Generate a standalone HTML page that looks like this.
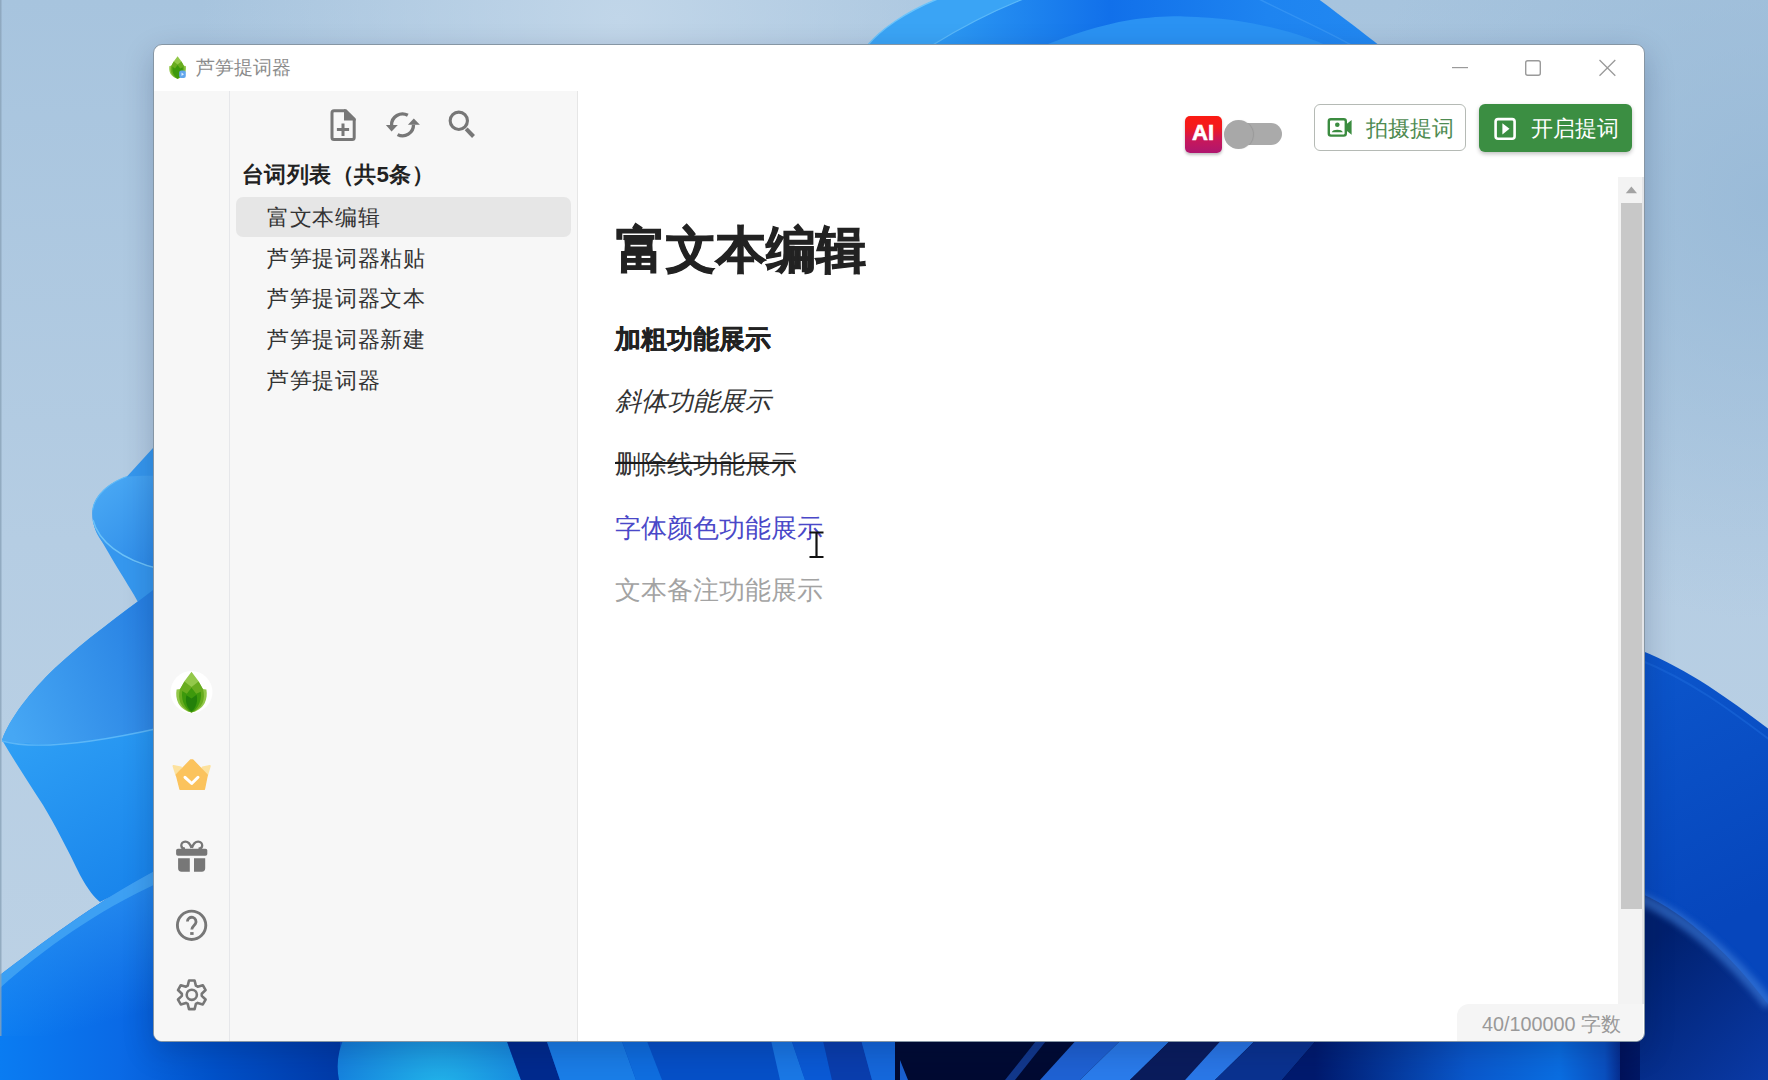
<!DOCTYPE html>
<html><head><meta charset="utf-8">
<style>
*{margin:0;padding:0;box-sizing:border-box}
html,body{width:1768px;height:1080px;overflow:hidden;font-family:"Liberation Sans",sans-serif}
body{position:relative;background:#aec8df}
svg{position:absolute;left:0;top:0;overflow:visible}
.a{position:absolute;white-space:nowrap;line-height:1}
#win{position:absolute;left:153px;top:44px;width:1492px;height:998px;border:1px solid #8696a4;border-radius:9px;background:#fff;overflow:hidden;box-shadow:0 10px 30px rgba(0,20,60,.22)}
</style></head>
<body>
<!-- wallpaper -->
<svg width="1768" height="1080" viewBox="0 0 1768 1080">
  <defs>
    <linearGradient id="bgG" x1="0" y1="0" x2="0" y2="1">
      <stop offset="0" stop-color="#a7c4de"/>
      <stop offset="0.5" stop-color="#b5cde3"/>
      <stop offset="1" stop-color="#bdd2e5"/>
    </linearGradient>
    <radialGradient id="bgLight" cx="620" cy="20" r="420" gradientUnits="userSpaceOnUse">
      <stop offset="0" stop-color="#c4d8ea" stop-opacity=".9"/>
      <stop offset="1" stop-color="#c4d8ea" stop-opacity="0"/>
    </radialGradient>
    <radialGradient id="bgDark" cx="1768" cy="200" r="420" gradientUnits="userSpaceOnUse">
      <stop offset="0" stop-color="#96b8d6" stop-opacity=".8"/>
      <stop offset="1" stop-color="#96b8d6" stop-opacity="0"/>
    </radialGradient>
    <linearGradient id="domeMid" x1="930" y1="0" x2="1380" y2="0" gradientUnits="userSpaceOnUse">
      <stop offset="0" stop-color="#2e9cf4"/>
      <stop offset="0.4" stop-color="#1170ea"/>
      <stop offset="0.75" stop-color="#1e84f0"/>
      <stop offset="1" stop-color="#2288f1"/>
    </linearGradient>
    <linearGradient id="cupA" x1="90" y1="480" x2="160" y2="560" gradientUnits="userSpaceOnUse">
      <stop offset="0" stop-color="#4cabf5"/>
      <stop offset="1" stop-color="#2d8be8"/>
    </linearGradient>
    <linearGradient id="cupB" x1="0" y1="700" x2="160" y2="640" gradientUnits="userSpaceOnUse">
      <stop offset="0" stop-color="#46a7f4"/>
      <stop offset="1" stop-color="#2780e2"/>
    </linearGradient>
    <linearGradient id="sideB" x1="0" y1="740" x2="100" y2="900" gradientUnits="userSpaceOnUse">
      <stop offset="0" stop-color="#2fa0f5"/>
      <stop offset="1" stop-color="#1a86ec"/>
    </linearGradient>
    <linearGradient id="petC" x1="0" y1="890" x2="40" y2="1040" gradientUnits="userSpaceOnUse">
      <stop offset="0" stop-color="#2a90f0" stop-opacity="1"/>
      <stop offset="1" stop-color="#2a90f0" stop-opacity="0"/>
    </linearGradient>
    <linearGradient id="botL" x1="0" y1="0" x2="340" y2="0" gradientUnits="userSpaceOnUse">
      <stop offset="0" stop-color="#0a7cf2"/>
      <stop offset="0.35" stop-color="#0a6ae6"/>
      <stop offset="0.65" stop-color="#0050c8"/>
      <stop offset="1" stop-color="#003aa8"/>
    </linearGradient>
    <radialGradient id="cyan" cx="440" cy="1090" r="110" gradientUnits="userSpaceOnUse">
      <stop offset="0" stop-color="#22b4ea"/>
      <stop offset="1" stop-color="#1580de"/>
    </radialGradient>
    <linearGradient id="botR" x1="1315" y1="0" x2="1620" y2="0" gradientUnits="userSpaceOnUse">
      <stop offset="0" stop-color="#001a6e"/>
      <stop offset="0.5" stop-color="#0a58cc"/>
      <stop offset="0.8" stop-color="#0a6ee2"/>
      <stop offset="0.95" stop-color="#0a50c0"/>
      <stop offset="1" stop-color="#062e90"/>
    </linearGradient>
    <linearGradient id="botRR" x1="1620" y1="0" x2="1768" y2="0" gradientUnits="userSpaceOnUse">
      <stop offset="0" stop-color="#00125a"/>
      <stop offset="1" stop-color="#0a3aa6"/>
    </linearGradient>
    <linearGradient id="rightP" x1="1644" y1="650" x2="1768" y2="900" gradientUnits="userSpaceOnUse">
      <stop offset="0" stop-color="#0c56cc"/>
      <stop offset="1" stop-color="#0646bc"/>
    </linearGradient>
  <linearGradient id="rightLow" x1="1644" y1="950" x2="1768" y2="1080" gradientUnits="userSpaceOnUse">
      <stop offset="0" stop-color="#00206e"/>
      <stop offset="1" stop-color="#0a3aa6"/>
    </linearGradient>
    <filter id="blur3" x="-20%" y="-20%" width="140%" height="140%"><feGaussianBlur stdDeviation="3"/></filter>
  </defs>
  <rect x="0" y="0" width="1768" height="1080" fill="url(#bgG)"/>
  <rect x="0" y="0" width="1768" height="1080" fill="url(#bgLight)"/>
  <rect x="0" y="0" width="1768" height="1080" fill="url(#bgDark)"/>
  <!-- top dome -->
  <path d="M867,46 C880,30 905,12 940,-2 L1317,-2 C1340,15 1362,32 1380,46 Z" fill="url(#domeMid)"/>
  <path d="M867,46 C880,30 905,12 940,-2 L1026,-2 C1000,8 965,25 931,46Z" fill="#3aa4f5"/>
  <path d="M867,46 C880,30 905,12 940,-2" stroke="#6cc4fa" stroke-width="1.5" fill="none"/>
  <path d="M931,46 C965,25 1000,8 1026,-2" stroke="#5ab8f8" stroke-width="1.2" fill="none"/>
  <path d="M1043,46 C1070,35 1100,25 1130,20 C1150,17 1170,16 1184,16.4 C1220,17 1250,22 1274,28 C1295,33 1315,40 1328,46 Z" fill="#2a92f3"/>
  <path d="M1257,-2 C1290,15 1325,30 1353,46" stroke="#3a98f5" stroke-width="1.5" fill="none" opacity=".7"/>
  <!-- left petals -->
  <path d="M153,448 L127,476.5 C110,482 95,495 92.5,510 C91.5,522 95,530 100,538 C110,556 122,575 131,590 C140,605 148,620 153,634 L160,634 L160,448 Z" fill="#3597ee"/>
  <path d="M127,476.5 C140,475.5 150,475.5 160,476 L160,569 C140,566 115,556 104,544 C95,534 91,520 93,508 C95,495 108,483 127,476.5Z" fill="url(#cupA)"/>
  <path d="M93,520 C98,540 120,560 160,569" stroke="#6cc2f8" stroke-width="1.4" fill="none"/>
  <path d="M127,476.5 C110,482 95,495 92.5,510" stroke="#62bcf8" stroke-width="1.2" fill="none"/>
  <path d="M153,590 C120,615 85,640 55,668 C30,692 10,718 2,740 C15,762 30,785 43,805 C55,825 68,850 80,875 C88,890 95,898 100,902 L160,872 L160,590 Z" fill="url(#sideB)"/>
  <path d="M153,590 C120,615 85,640 55,668 C30,692 10,718 2,740 C30,748 80,745 160,727 L160,590Z" fill="url(#cupB)"/>
  <path d="M2,741 C30,749 80,746 160,728" stroke="#5cb6f7" stroke-width="1.4" fill="none"/>
  <path d="M0,975 C40,945 90,905 160,868 L160,1080 L0,1080 Z" fill="url(#botL)"/>
  <path d="M0,975 C40,945 90,905 160,868 L160,1080 L0,1080 Z" fill="url(#petC)"/>
  <path d="M0,975 C40,945 90,905 160,868 L160,882 C95,912 45,948 0,988Z" fill="#45a6f4" opacity=".8"/>
  <rect x="0" y="0" width="1.5" height="1080" fill="#8aa2b8" opacity=".8"/>
  <!-- bottom strip -->
  <rect x="0" y="1036" width="340" height="44" fill="url(#botL)"/>
  <rect x="340" y="1036" width="560" height="44" fill="#0650c8"/>
  <path d="M339,1080 C336,1065 338,1050 345,1036 L505,1036 C510,1050 515,1065 521,1080Z" fill="url(#cyan)"/>
  <path d="M505,1036 L545,1036 L560,1080 L521,1080Z" fill="#002a8e"/>
  <path d="M545,1036 L620,1036 L636,1080 L560,1080Z" fill="#1a7ee8"/>
  <path d="M620,1036 L645,1036 L662,1080 L636,1080Z" fill="#0f6ee0"/>
  <path d="M770,1036 L790,1036 L805,1080 L780,1080Z" fill="#1a78e6"/>
  <path d="M790,1036 L822,1036 L832,1080 L805,1080Z" fill="#0a5ad6"/>
  <path d="M822,1036 L860,1036 L872,1080 L832,1080Z" fill="#0a3eae"/>
  <path d="M860,1036 L895,1036 L905,1080 L872,1080Z" fill="#1568dc"/>
  <rect x="895" y="1036" width="420" height="44" fill="#000a32"/>
  <path d="M900,1060 L908,1080 L900,1080Z" fill="#1a60d0"/>
  <path d="M1040,1036 L1050,1036 L1015,1080 L1005,1080Z" fill="#12388c"/>
  <path d="M1080,1036 L1125,1036 L1080,1080 L1040,1080Z" fill="#1f62d4"/>
  <path d="M1125,1036 L1175,1036 L1130,1080 L1080,1080Z" fill="#2a7cec"/>
  <path d="M1175,1036 L1225,1036 L1185,1080 L1130,1080Z" fill="#0a1c5c"/>
  <path d="M1225,1036 L1260,1036 L1215,1080 L1185,1080Z" fill="#2a78e8"/>
  <path d="M1215,1080 L1260,1036 L1320,1036 L1282,1080Z" fill="#0a3290"/>
  <path d="M1282,1080 L1320,1036 L1768,1036 L1768,1080Z" fill="url(#botR)"/>
  <rect x="1620" y="1036" width="148" height="44" fill="url(#botRR)"/>
  <!-- right strip -->
  <path d="M1640,650 C1690,670 1730,700 1770,730 L1770,1080 L1640,1080 Z" fill="url(#rightP)"/>
  <path d="M1640,660 C1690,680 1730,710 1770,740" stroke="#1a68d8" stroke-width="2" fill="none" opacity=".6"/>
  <path d="M1640,893 C1690,915 1735,960 1770,1007 L1770,1080 L1640,1080 Z" fill="url(#rightLow)"/>
  <path d="M1640,898 C1690,920 1735,962 1770,1005" stroke="#3f7fdc" stroke-width="12" fill="none" opacity=".6" filter="url(#blur3)"/>
</svg>

<div id="win"></div>

<!-- title bar -->
<svg width="1768" height="1080" viewBox="0 0 1768 1080">
  <!-- app icon -->
  <g transform="translate(177.6,56.3) scale(0.55) translate(-191.5,-671.8)">
  <path d="M191.5,671.8 L198.6,681.2 L202.6,689 L206.4,689.6 C207.2,694 206.8,699 204.5,703.5 C201.5,708.5 196.5,711.5 191.5,712.6 C186.5,711.5 181.5,708.5 178.5,703.5 C176.2,699 175.8,694 176.6,689.6 L180.4,689 L184.4,681.2Z" fill="#93c84a"/>
  <path d="M184.4,681.4 L191.5,686.9 L198.6,681.4 L203,689 C204.5,694 204.2,699 202.5,703 C200,708 196,711 191.5,712.6 C187,711 183,708 180.5,703 C178.8,699 178.5,694 180,689Z" fill="#68ac1f"/>
  <path d="M182.2,691 L186.8,693.8 L191.5,687.8 L196.2,693.8 L200.8,691.8 C201.5,697 200.5,702 198,706 C196,709.5 193.5,711.5 191.5,712.6 C189.5,711.5 187,709.5 185,706 C182.5,702 181.5,697 182.2,691Z" fill="#3d990c"/>
  </g>
  <rect x="179.2" y="70.5" width="6.6" height="7.6" rx="2" fill="#62a6ec"/>
  <path d="M181.5,72.5 L184,74.3 L181.5,76.1Z" fill="#d8ecff"/>
  <!-- window controls -->
  <rect x="1452" y="67" width="16" height="1.2" fill="#9a9a9a"/>
  <rect x="1525.7" y="60.7" width="14.6" height="14.6" rx="2" fill="none" stroke="#9a9a9a" stroke-width="1.4"/>
  <path d="M1599.5,60 L1615.3,75.8 M1615.3,60 L1599.5,75.8" stroke="#9a9a9a" stroke-width="1.3"/>
</svg>
<div class="a" style="left:196px;top:58px;font-size:19px;color:#8c8c8c">芦笋提词器</div>

<!-- nav column + list -->
<div class="a" style="left:154px;top:91px;width:75px;height:950px;background:#f7f7f7;border-bottom-left-radius:8px"></div>
<div class="a" style="left:229px;top:91px;width:1px;height:950px;background:#e6e7ea"></div>
<div class="a" style="left:230px;top:91px;width:347px;height:950px;background:#f7f7f7"></div>
<div class="a" style="left:577px;top:91px;width:1px;height:950px;background:#e6e6e6"></div>

<svg width="1768" height="1080" viewBox="0 0 1768 1080">
  <g fill="none" stroke="#777" stroke-width="3">
    <!-- new file -->
    <path d="M345.5,110.7 H334 a2,2 0 0 0 -2,2 V137.5 a2,2 0 0 0 2,2 H352.2 a2,2 0 0 0 2,-2 V119"/>
    <path d="M343,123.6 V135.9 M336.9,129.6 H349.1"/>
    <!-- refresh -->
    <path d="M391.6,125 A10.9,10.9 0 0 1 407.8,115.3" stroke-width="3.3"/>
    <path d="M413.5,124.8 A10.9,10.9 0 0 1 397.6,134.6" stroke-width="3.3"/>
    <!-- search -->
    <circle cx="458.8" cy="120.8" r="8.65" stroke-width="3.1"/>
    <path d="M466.2,128.8 L473.5,136.5" stroke-width="4"/>
  </g>
  <g fill="#777">
    <path d="M344,109.2 H346.3 L355.7,118.6 V120.5 H344Z"/>
    <path d="M385.9,125.1 H397.8 L391.6,131.4Z"/>
    <path d="M407.9,124.7 H419.9 L413.8,118.6Z"/>
  </g>
  <!-- avatar leaf -->
  <circle cx="191.5" cy="692" r="21" fill="#fff"/>
  <path d="M191.5,671.8 L198.6,681.2 L202.6,689 L206.4,689.6 C207.2,694 206.8,699 204.5,703.5 C201.5,708.5 196.5,711.5 191.5,712.6 C186.5,711.5 181.5,708.5 178.5,703.5 C176.2,699 175.8,694 176.6,689.6 L180.4,689 L184.4,681.2Z" fill="#93c84a"/>
  <path d="M184.4,681.4 L191.5,686.9 L198.6,681.4 L203,689 C204.5,694 204.2,699 202.5,703 C200,708 196,711 191.5,712.6 C187,711 183,708 180.5,703 C178.8,699 178.5,694 180,689Z" fill="#68ac1f"/>
  <path d="M182.2,691 L186.8,693.8 L191.5,687.8 L196.2,693.8 L200.8,691.8 C201.5,697 200.5,702 198,706 C196,709.5 193.5,711.5 191.5,712.6 C189.5,711.5 187,709.5 185,706 C182.5,702 181.5,697 182.2,691Z" fill="#3d990c"/>
  <path d="M186.4,695.2 L191.5,698.4 L196.6,694.7 C197.5,699 197.2,703 195.5,706.5 C194.5,708.8 193,710.5 191.5,711.5 C190,710.5 188.5,708.8 187.5,706.5 C185.8,703 185.5,699 186.4,695.2Z" fill="#23800a"/>
  <!-- crown -->
  <path d="M173.5,766 L181,767.5 L176.5,775.5Z" fill="#fde29e" stroke="#fde29e" stroke-width="2" stroke-linejoin="round"/>
  <path d="M209.8,766 L202.5,767.5 L207,775.5Z" fill="#fde29e" stroke="#fde29e" stroke-width="2" stroke-linejoin="round"/>
  <path d="M190.6,760 L192.8,760 L207.2,775 L204.4,789.2 H180 L176.4,774.8Z" fill="#fbc35d" stroke="#fbc35d" stroke-width="1.4" stroke-linejoin="round"/>
  <path d="M185,777.3 L191.7,783.5 L198,777.3" fill="none" stroke="#fff" stroke-width="3" stroke-linecap="round" stroke-linejoin="round"/>
  <!-- gift -->
  <rect x="176.1" y="848.7" width="31.2" height="7.1" rx="1.8" fill="#777"/>
  <path d="M178.1,858.2 H189.8 V871.7 H181.5 a3.4,3.4 0 0 1 -3.4,-3.4Z" fill="#777"/>
  <path d="M194,858.2 H205.2 V868.3 a3.4,3.4 0 0 1 -3.4,3.4 H194Z" fill="#777"/>
  <path d="M191.5,848 C190,843 187.5,841.6 185.3,841.6 C182.8,841.6 181.3,843.6 181.3,845.6 C181.3,847.6 183,848.7 185,848.7 M191.9,848 C193.4,843 196,841.6 198.2,841.6 C200.7,841.6 202.2,843.6 202.2,845.6 C202.2,847.6 200.5,848.7 198.5,848.7" fill="none" stroke="#777" stroke-width="2.3"/>
  <!-- help -->
  <circle cx="191.6" cy="925.3" r="14.2" fill="none" stroke="#777" stroke-width="2.9"/>
  <path d="M187.4,921.5 A4.3,4.3 0 1 1 195.5,923.6 C194.5,925.5 191.8,926.5 191.8,929.6" fill="none" stroke="#777" stroke-width="2.8"/>
  <rect x="190.2" y="932.1" width="3.4" height="2.8" fill="#777"/>
  <!-- settings -->
  <path d="M187.73,985.66 L189.01,980.47 L194.59,980.47 L195.87,985.66 L197.68,986.71 L202.82,985.22 L205.60,990.05 L201.75,993.75 L201.75,995.85 L205.60,999.55 L202.82,1004.38 L197.68,1002.89 L195.87,1003.94 L194.59,1009.13 L189.01,1009.13 L187.73,1003.94 L185.92,1002.89 L180.78,1004.38 L178.00,999.55 L181.85,995.85 L181.85,993.75 L178.00,990.05 L180.78,985.22 L185.92,986.71Z" fill="none" stroke="#777" stroke-width="2.6" stroke-linejoin="round"/>
  <circle cx="191.8" cy="994.8" r="5.1" fill="none" stroke="#777" stroke-width="2.6"/>
</svg>

<!-- list -->
<div class="a" style="left:241.5px;top:164px;font-size:22.3px;letter-spacing:.5px;font-weight:bold;color:#222">台词列表（共5条）</div>
<div class="a" style="left:236px;top:197px;width:335px;height:40px;background:#e6e6e6;border-radius:7px"></div>
<div class="a" style="left:267px;top:207px;font-size:22.2px;letter-spacing:0.65px;color:#333">富文本编辑</div>
<div class="a" style="left:267px;top:248px;font-size:22.2px;letter-spacing:0.65px;color:#333">芦笋提词器粘贴</div>
<div class="a" style="left:267px;top:288px;font-size:22.2px;letter-spacing:0.65px;color:#333">芦笋提词器文本</div>
<div class="a" style="left:267px;top:329px;font-size:22.2px;letter-spacing:0.65px;color:#333">芦笋提词器新建</div>
<div class="a" style="left:267px;top:370px;font-size:22.2px;letter-spacing:0.65px;color:#333">芦笋提词器</div>

<!-- top right controls -->
<div class="a" style="left:1184.5px;top:115.5px;width:37.5px;height:37.5px;border-radius:5px;background:linear-gradient(#fb1a12 0%,#f31a1e 30%,#c8175a 65%,#ae166f 100%);box-shadow:0 2px 3px rgba(0,0,0,.25)"></div>
<div class="a" style="left:1183px;top:121.5px;width:40px;text-align:center;font-size:22px;font-weight:bold;color:#fff;letter-spacing:0;-webkit-text-stroke:.6px #fff">AI</div>
<div class="a" style="left:1226px;top:123px;width:56px;height:22px;border-radius:11px;background:#aaa"></div>
<div class="a" style="left:1224px;top:120px;width:29.2px;height:29.2px;border-radius:50%;background:#a8a8a8;box-shadow:1px 0 1px rgba(0,0,0,.1)"></div>

<div class="a" style="left:1313.5px;top:104px;width:152.5px;height:47px;border:1px solid #b5bab5;border-radius:6px;background:#fff"></div>
<svg width="1768" height="1080" viewBox="0 0 1768 1080">
  <rect x="1328.8" y="119.2" width="17" height="16.4" rx="2" fill="none" stroke="#3b8c40" stroke-width="2.4"/>
  <path d="M1346,124.5 L1351.6,120 V134.8 L1346,130.3Z" fill="#3b8c40"/>
  <circle cx="1337.3" cy="124.7" r="2.3" fill="#3b8c40"/>
  <path d="M1331.8,132.3 C1332.3,129 1342.3,129 1342.8,132.3Z" fill="#3b8c40"/>
</svg>
<div class="a" style="left:1366px;top:119px;font-size:21.5px;color:#4f8b52">拍摄提词</div>

<div class="a" style="left:1479px;top:104px;width:153px;height:48px;border-radius:6px;background:#3b8e42;box-shadow:0 2px 4px rgba(0,0,0,.25)"></div>
<svg width="1768" height="1080" viewBox="0 0 1768 1080">
  <rect x="1495.6" y="119.1" width="19" height="19.6" rx="2.5" fill="none" stroke="#fff" stroke-width="2.6"/>
  <path d="M1502.4,123.2 L1509.5,128.8 L1502.4,134.4Z" fill="#fff"/>
</svg>
<div class="a" style="left:1531px;top:119px;font-size:21.5px;color:#fff">开启提词</div>

<!-- editor -->
<div class="a" style="left:616px;top:225px;font-size:50.3px;font-weight:bold;color:#222;-webkit-text-stroke:1.1px #222">富文本编辑</div>
<div class="a" style="left:615px;top:326px;font-size:26px;font-weight:bold;color:#222;-webkit-text-stroke:.4px #222">加粗功能展示</div>
<div class="a" style="left:615px;top:388px;font-size:26px;font-style:italic;color:#333">斜体功能展示</div>
<div class="a" style="left:615px;top:451px;font-size:26px;color:#333">删除线功能展示</div>
<div class="a" style="left:615px;top:462.3px;width:179px;height:2px;background:#1a1a1a"></div>
<div class="a" style="left:615px;top:515px;font-size:26px;color:#4a48c8">字体颜色功能展示</div>
<div class="a" style="left:615px;top:577.5px;font-size:25.8px;color:#a3a3a3">文本备注功能展示</div>
<svg width="1768" height="1080" viewBox="0 0 1768 1080">
  <path d="M809.5,532.5 H823.5 M809.5,557 H823.5 M816.5,532.5 V557" stroke="#111" stroke-width="2.2"/>
</svg>

<!-- scrollbar -->
<div class="a" style="left:1618px;top:177px;width:26px;height:827px;background:#f3f3f3;border-right:2px solid #e4e5e8"></div>
<div class="a" style="left:1621px;top:203px;width:21px;height:706px;background:#c8c8c8"></div>
<svg width="1768" height="1080" viewBox="0 0 1768 1080">
  <path d="M1625.8,193.2 L1631.4,186.6 L1637,193.2Z" fill="#a3a3a3"/>
</svg>

<!-- counter -->
<div class="a" style="left:1457px;top:1004px;width:186px;height:37px;background:#f5f5f5;border-top-left-radius:12px;border-bottom-right-radius:8px"></div>
<div class="a" style="left:1482px;top:1014.5px;font-size:19.8px;color:#999">40/100000 字数</div>
</body></html>
